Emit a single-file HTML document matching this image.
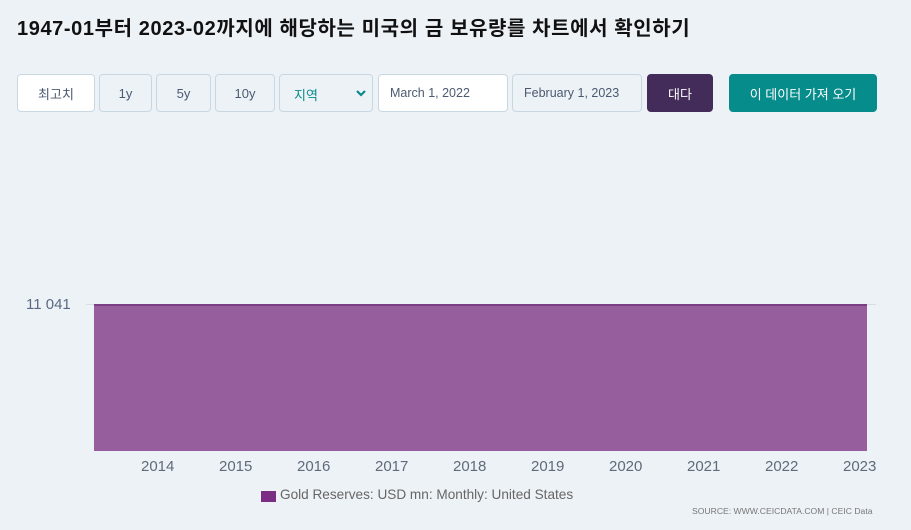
<!DOCTYPE html>
<html><head><meta charset="utf-8"><style>
*{box-sizing:border-box;margin:0;padding:0}
body{width:911px;height:530px;background:#edf2f7;font-family:"Liberation Sans","Noto Sans CJK KR",sans-serif;position:relative;overflow:hidden}
h1{position:absolute;left:17px;top:12px;font-size:20px;font-weight:bold;color:#111;letter-spacing:0.6px;white-space:nowrap}
.b{position:absolute;top:74px;height:38px;border:1px solid #c8d8e2;border-radius:4px;font-size:13px;color:#4a5a70;display:flex;align-items:center;justify-content:center}
.w{background:#fff}
.chart{position:absolute;left:94px;top:304px;width:773px;height:147px;background:#975e9e;border-top:2px solid #7b3e85}
.yl{position:absolute;left:26px;top:296px;font-size:15px;color:#5a6a80}
.grid{position:absolute;left:86px;top:304px;width:790px;height:1px;background:#d8dde3}
.x{position:absolute;top:458px;font-size:15px;color:#606a78}
</style></head><body>
<h1>1947-01부터 2023-02까지에 해당하는 미국의 금 보유량를 차트에서 확인하기</h1>
<div class="b w" style="left:17px;width:78px">최고치</div>
<div class="b" style="left:99px;width:53px">1y</div>
<div class="b" style="left:156px;width:55px">5y</div>
<div class="b" style="left:215px;width:60px">10y</div>
<div class="b" style="left:279px;width:94px;justify-content:flex-start;padding-left:14px;color:#0a8a8a;align-items:flex-start;padding-top:10px">지역
<svg style="position:absolute;right:6px;top:14px" width="10" height="8" viewBox="0 0 10 8"><path d="M1 2 L5 6 L9 2" stroke="#0a8a8a" stroke-width="2.2" fill="none"/></svg></div>
<div class="b w" style="left:378px;width:130px;justify-content:flex-start;padding-left:11px;font-size:12.5px">March 1, 2022</div>
<div class="b" style="left:512px;width:130px;justify-content:flex-start;padding-left:11px;font-size:12.5px">February 1, 2023</div>
<div class="b" style="left:647px;width:66px;background:#432b5a;border-color:#432b5a;color:#fff">대다</div>
<div class="b" style="left:729px;width:148px;background:#078c8c;border-color:#078c8c;color:#fff">이 데이터 가져 오기</div>
<div class="grid"></div>
<div class="yl">11 041</div>
<div class="chart"></div>
<div class="x" style="left:141px">2014</div>
<div class="x" style="left:219px">2015</div>
<div class="x" style="left:297px">2016</div>
<div class="x" style="left:375px">2017</div>
<div class="x" style="left:453px">2018</div>
<div class="x" style="left:531px">2019</div>
<div class="x" style="left:609px">2020</div>
<div class="x" style="left:687px">2021</div>
<div class="x" style="left:765px">2022</div>
<div class="x" style="left:843px">2023</div>
<div style="position:absolute;left:261px;top:491px;width:15px;height:11px;background:#7b2c83"></div>
<div style="position:absolute;left:280px;top:487px;font-size:13.6px;color:#666">Gold Reserves: USD mn: Monthly: United States</div>
<div style="position:absolute;left:692px;top:506px;font-size:8.6px;color:#777">SOURCE: WWW.CEICDATA.COM | CEIC Data</div>
</body></html>
